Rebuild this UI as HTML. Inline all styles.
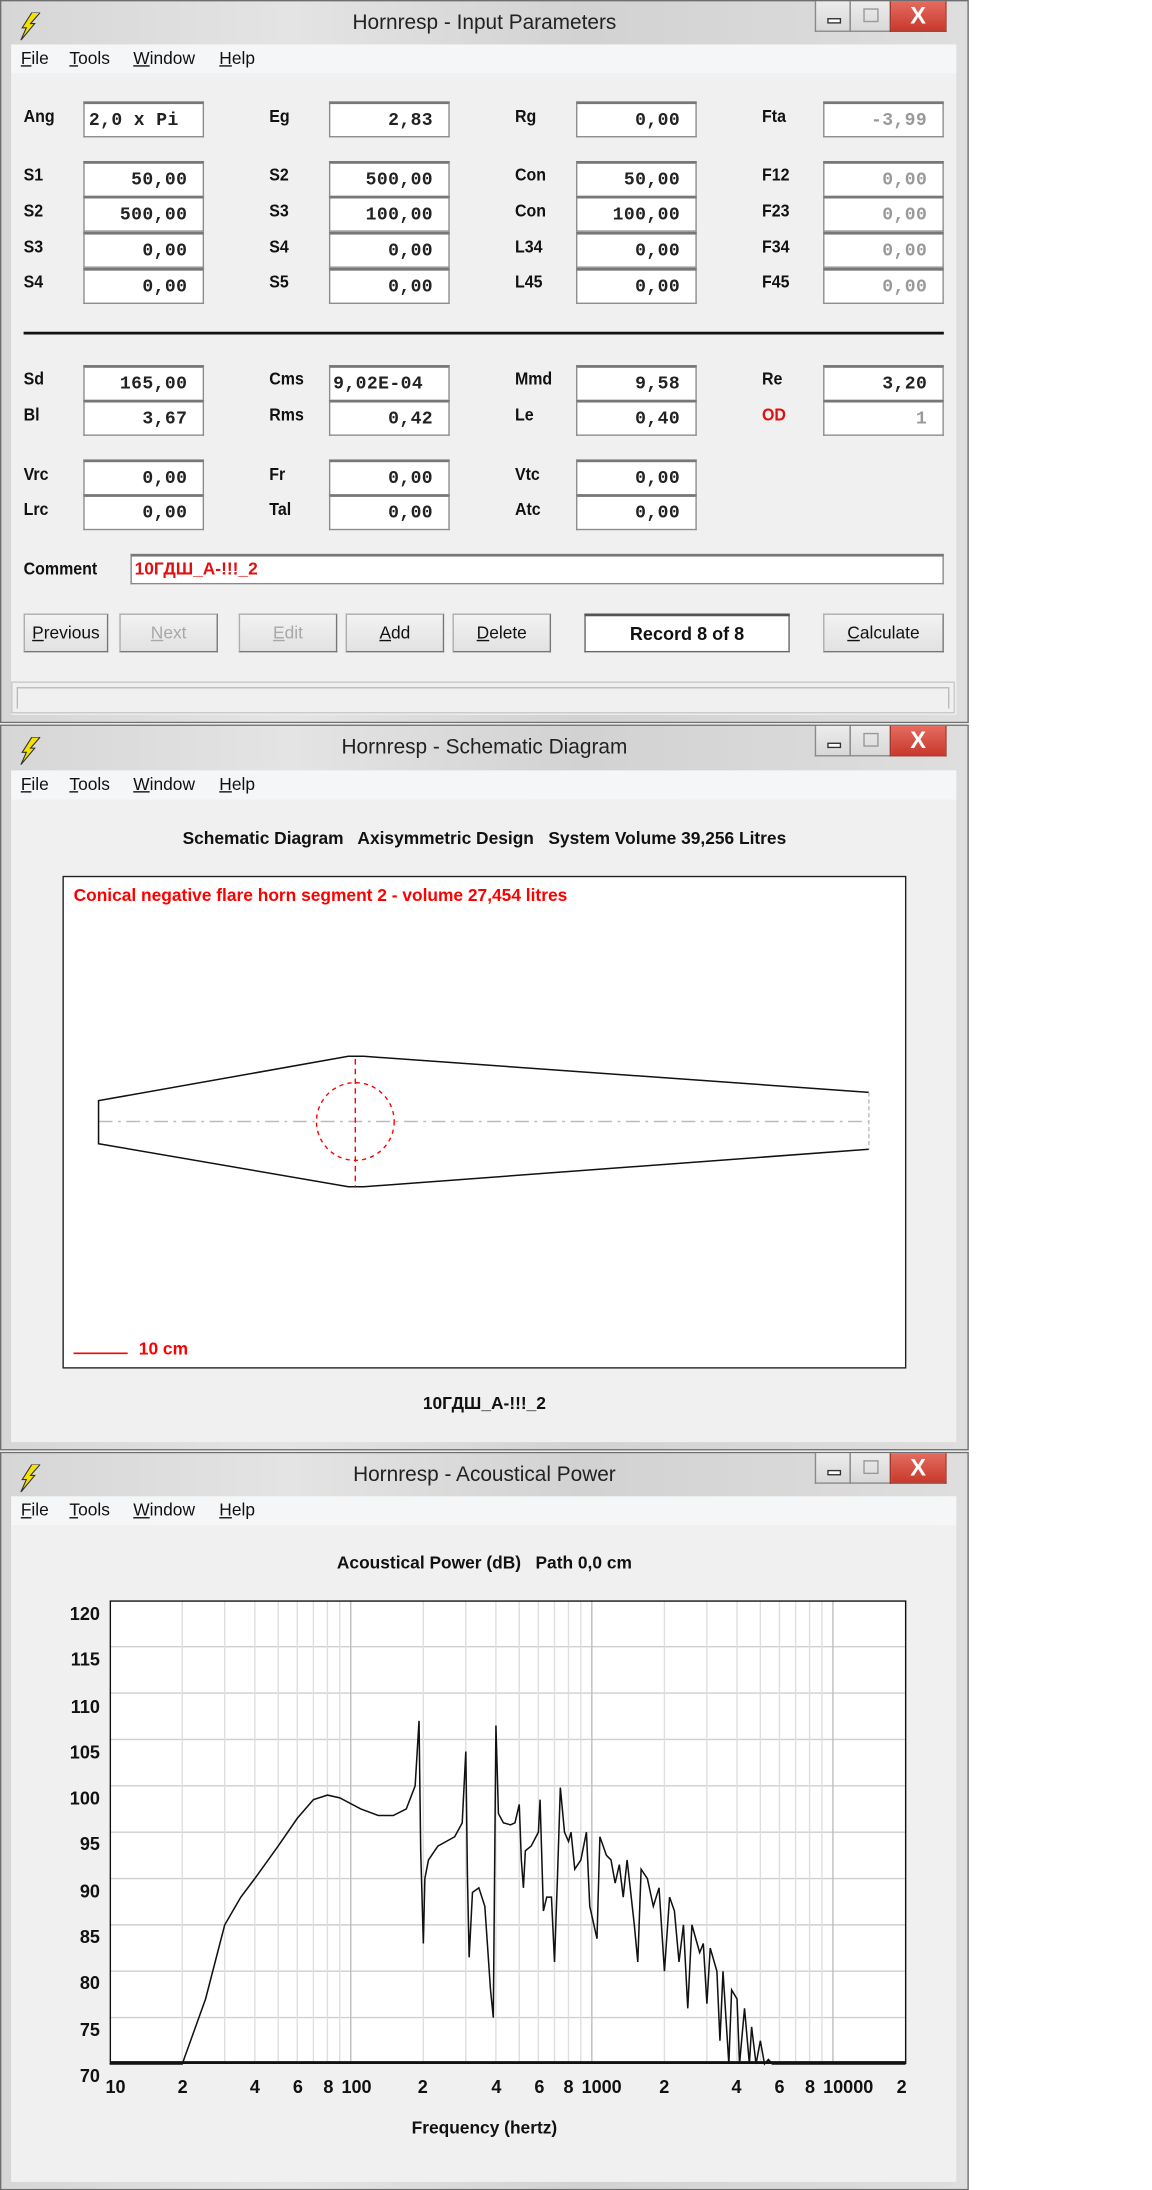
<!DOCTYPE html>
<html><head><meta charset="utf-8">
<style>
*{margin:0;padding:0;box-sizing:border-box}
html,body{width:1152px;height:2190px;overflow:hidden;background:#fff}
#wrap{position:absolute;left:0;top:0;width:830px;height:1578px;transform:scale(1.388);transform-origin:0 0;font-family:"Liberation Sans Narrow","Liberation Sans",sans-serif}
.win{position:absolute;left:0;width:698px;background:linear-gradient(90deg,#d6d6d6,#e4e4e4 30%,#d2d2d2 60%,#dedede);border:1px solid #6e6e6e}
.client{position:absolute;left:7px;right:8px;background:#f0f0f0}
.menu{position:absolute;left:7px;right:8px;height:21px;background:#f5f6f7;font-family:"Liberation Sans",sans-serif;font-size:12.5px;color:#111}
.menu span{position:absolute;top:3px}
.menu u{text-decoration:underline}
.title{position:absolute;left:0;right:0;top:7px;text-align:center;font-family:"Liberation Sans",sans-serif;font-size:15px;color:#222}
.bolt{position:absolute;left:12px;top:8px}
.bmin,.bmax,.bcl{position:absolute;top:0;height:22px;border:1px solid #8a8a8a;border-top:none}
.bmin{left:586px;width:26px;background:linear-gradient(#ececec,#d8d8d8)}
.bmax{left:611px;width:30px;background:linear-gradient(#ececec,#d8d8d8)}
.bcl{left:640px;width:41px;background:linear-gradient(#e46c60,#c9392c);border-color:#9c3a30}
.bcl b{position:absolute;left:0;right:0;top:1px;text-align:center;color:#fff;font:bold 17px "Liberation Sans",sans-serif}
.lb{position:absolute;font-weight:bold;font-size:12.5px;color:#111;transform:scaleX(.92);transform-origin:0 0}
.fd{position:absolute;width:87px;height:26px;background:#fff;border:1px solid #8c8c8c;border-top:2px solid #777;font-family:"Liberation Mono",monospace;font-weight:bold;font-size:13px;color:#222;text-align:right;padding:4px 11px 0 0;letter-spacing:.3px}
.g{color:#999}
.btn{position:absolute;top:442px;height:28px;background:linear-gradient(#f2f2f2,#e2e2e2);border:1px solid #adadad;border-right-color:#777;border-bottom-color:#777;font-size:12.5px;color:#111;text-align:center;padding-top:6px}
.btn.dis{color:#a8a8a8}
.c{position:absolute;left:0;width:698px;text-align:center;font-weight:bold;font-size:12.5px;color:#111}
</style></head><body>
<div id="wrap">

<!-- WINDOW 1 -->
<div class="win" style="top:0;height:521px">
  <svg class="bolt" width="16" height="20" viewBox="0 0 16 20"><path d="M10 0 L16 0 L9 8 L12 8 L2 20 L6 11 L3 11 Z" fill="#f5e000" stroke="#333" stroke-width=".8"/></svg>
  <div class="title">Hornresp - Input Parameters</div>
  <div class="bmin"><div style="position:absolute;left:8px;top:12px;width:10px;height:4px;border:1px solid #333;background:#fff"></div></div>
  <div class="bmax"><div style="position:absolute;left:9px;top:5px;width:11px;height:10px;border:1px solid #999"></div></div>
  <div class="bcl"><b>X</b></div>
  <div class="menu" style="top:31px"><span style="left:7px"><u>F</u>ile</span><span style="left:42px"><u>T</u>ools</span><span style="left:88px"><u>W</u>indow</span><span style="left:150px"><u>H</u>elp</span></div>
  <div class="client" style="top:52px;height:462px"></div>
</div>
<div style="position:absolute;left:0;top:0;width:698px;height:521px">
  <div class="lb" style="left:17px;top:77px">Ang</div><div class="fd" style="left:60px;top:73px;text-align:left;padding-left:3px">2,0 x Pi</div>
  <div class="lb" style="left:194px;top:77px">Eg</div><div class="fd" style="left:237px;top:73px">2,83</div>
  <div class="lb" style="left:371px;top:77px">Rg</div><div class="fd" style="left:415px;top:73px">0,00</div>
  <div class="lb" style="left:549px;top:77px">Fta</div><div class="fd g" style="left:593px;top:73px">-3,99</div>

  <div class="lb" style="left:17px;top:119px">S1</div><div class="fd" style="left:60px;top:116px">50,00</div>
  <div class="lb" style="left:17px;top:145px">S2</div><div class="fd" style="left:60px;top:141px">500,00</div>
  <div class="lb" style="left:17px;top:171px">S3</div><div class="fd" style="left:60px;top:167px">0,00</div>
  <div class="lb" style="left:17px;top:196px">S4</div><div class="fd" style="left:60px;top:193px">0,00</div>

  <div class="lb" style="left:194px;top:119px">S2</div><div class="fd" style="left:237px;top:116px">500,00</div>
  <div class="lb" style="left:194px;top:145px">S3</div><div class="fd" style="left:237px;top:141px">100,00</div>
  <div class="lb" style="left:194px;top:171px">S4</div><div class="fd" style="left:237px;top:167px">0,00</div>
  <div class="lb" style="left:194px;top:196px">S5</div><div class="fd" style="left:237px;top:193px">0,00</div>

  <div class="lb" style="left:371px;top:119px">Con</div><div class="fd" style="left:415px;top:116px">50,00</div>
  <div class="lb" style="left:371px;top:145px">Con</div><div class="fd" style="left:415px;top:141px">100,00</div>
  <div class="lb" style="left:371px;top:171px">L34</div><div class="fd" style="left:415px;top:167px">0,00</div>
  <div class="lb" style="left:371px;top:196px">L45</div><div class="fd" style="left:415px;top:193px">0,00</div>

  <div class="lb" style="left:549px;top:119px">F12</div><div class="fd g" style="left:593px;top:116px">0,00</div>
  <div class="lb" style="left:549px;top:145px">F23</div><div class="fd g" style="left:593px;top:141px">0,00</div>
  <div class="lb" style="left:549px;top:171px">F34</div><div class="fd g" style="left:593px;top:167px">0,00</div>
  <div class="lb" style="left:549px;top:196px">F45</div><div class="fd g" style="left:593px;top:193px">0,00</div>

  <div style="position:absolute;left:17px;top:239px;width:663px;height:2px;background:#111"></div>

  <div class="lb" style="left:17px;top:266px">Sd</div><div class="fd" style="left:60px;top:263px">165,00</div>
  <div class="lb" style="left:17px;top:292px">Bl</div><div class="fd" style="left:60px;top:288px">3,67</div>
  <div class="lb" style="left:194px;top:266px">Cms</div><div class="fd" style="left:237px;top:263px;text-align:left;padding-left:2px">9,02E-04</div>
  <div class="lb" style="left:194px;top:292px">Rms</div><div class="fd" style="left:237px;top:288px">0,42</div>
  <div class="lb" style="left:371px;top:266px">Mmd</div><div class="fd" style="left:415px;top:263px">9,58</div>
  <div class="lb" style="left:371px;top:292px">Le</div><div class="fd" style="left:415px;top:288px">0,40</div>
  <div class="lb" style="left:549px;top:266px">Re</div><div class="fd" style="left:593px;top:263px">3,20</div>
  <div class="lb" style="left:549px;top:292px;color:#e01010">OD</div><div class="fd g" style="left:593px;top:288px">1</div>

  <div class="lb" style="left:17px;top:335px">Vrc</div><div class="fd" style="left:60px;top:331px">0,00</div>
  <div class="lb" style="left:17px;top:360px">Lrc</div><div class="fd" style="left:60px;top:356px">0,00</div>
  <div class="lb" style="left:194px;top:335px">Fr</div><div class="fd" style="left:237px;top:331px">0,00</div>
  <div class="lb" style="left:194px;top:360px">Tal</div><div class="fd" style="left:237px;top:356px">0,00</div>
  <div class="lb" style="left:371px;top:335px">Vtc</div><div class="fd" style="left:415px;top:331px">0,00</div>
  <div class="lb" style="left:371px;top:360px">Atc</div><div class="fd" style="left:415px;top:356px">0,00</div>

  <div class="lb" style="left:17px;top:403px">Comment</div>
  <div style="position:absolute;left:94px;top:399px;width:586px;height:22px;background:#fff;border:1px solid #888;border-top:2px solid #777;color:#e01010;font-weight:bold;font-size:12.5px;padding:2px 0 0 2px;font-family:'Liberation Sans Narrow','Liberation Sans','Noto Sans CJK SC',sans-serif">10ГДШ_А-!!!_2</div>

  <div class="btn" style="left:17px;width:61px"><u>P</u>revious</div>
  <div class="btn dis" style="left:86px;width:71px"><u>N</u>ext</div>
  <div class="btn dis" style="left:172px;width:71px"><u>E</u>dit</div>
  <div class="btn" style="left:249px;width:71px"><u>A</u>dd</div>
  <div class="btn" style="left:326px;width:71px"><u>D</u>elete</div>
  <div style="position:absolute;left:421px;top:442px;width:148px;height:28px;background:#fff;border:1px solid #666;border-top:2px solid #555;text-align:center;font-weight:bold;font-size:13px;padding-top:5px;color:#111">Record 8 of 8</div>
  <div class="btn" style="left:593px;width:87px"><u>C</u>alculate</div>

  <div style="position:absolute;left:8px;top:491px;width:680px;height:23px;border:1px solid #c8c8c8;background:#f0f0f0"><div style="position:absolute;left:3px;top:3px;right:3px;bottom:2px;border:1px solid #bbb;border-bottom-color:#eee"></div></div>
</div>

<!-- WINDOW 2 -->
<div class="win" style="top:522px;height:523px">
  <svg class="bolt" width="16" height="20" viewBox="0 0 16 20"><path d="M10 0 L16 0 L9 8 L12 8 L2 20 L6 11 L3 11 Z" fill="#f5e000" stroke="#333" stroke-width=".8"/></svg>
  <div class="title">Hornresp - Schematic Diagram</div>
  <div class="bmin"><div style="position:absolute;left:8px;top:12px;width:10px;height:4px;border:1px solid #333;background:#fff"></div></div>
  <div class="bmax"><div style="position:absolute;left:9px;top:5px;width:11px;height:10px;border:1px solid #999"></div></div>
  <div class="bcl"><b>X</b></div>
  <div class="menu" style="top:32px"><span style="left:7px"><u>F</u>ile</span><span style="left:42px"><u>T</u>ools</span><span style="left:88px"><u>W</u>indow</span><span style="left:150px"><u>H</u>elp</span></div>
  <div class="client" style="top:53px;height:463px"></div>
</div>
<div class="c" style="top:597px">Schematic Diagram&nbsp;&nbsp; Axisymmetric Design&nbsp;&nbsp; System Volume 39,256 Litres</div>
<div style="position:absolute;left:45px;top:631px;width:608px;height:355px;background:#fff;border:1px solid #222"></div>
<div style="position:absolute;left:53px;top:638px;color:#f00;font-weight:bold;font-size:12.5px">Conical negative flare horn segment 2 - volume 27,454 litres</div>
<svg style="position:absolute;left:0;top:0" width="698" height="1045" viewBox="0 0 698 1045">
  <line x1="71" y1="808" x2="626" y2="808" stroke="#bbb" stroke-width="1" stroke-dasharray="10,4,2,4"/>
  <polyline points="71,808 71,793 251,761 262,761 626,787" fill="none" stroke="#111" stroke-width="1.1"/>
  <polyline points="71,808 71,824 251,855 262,855 626,828" fill="none" stroke="#111" stroke-width="1.1"/>
  <line x1="626" y1="787" x2="626" y2="828" stroke="#bbb" stroke-dasharray="3,2"/>
  <circle cx="256" cy="808" r="28" fill="none" stroke="#f00" stroke-dasharray="3,3"/>
  <line x1="256" y1="763" x2="256" y2="855" stroke="#f00" stroke-dasharray="4,3"/>
  <line x1="53" y1="975" x2="92" y2="975" stroke="#f00" stroke-width="1.2"/>
</svg>
<div style="position:absolute;left:100px;top:965px;color:#f00;font-weight:bold;font-size:12.5px">10 cm</div>
<div class="c" style="top:1004px;font-family:'Liberation Sans Narrow','Liberation Sans','Noto Sans CJK SC',sans-serif">10ГДШ_А-!!!_2</div>

<!-- WINDOW 3 -->
<div class="win" style="top:1046px;height:532px">
  <svg class="bolt" width="16" height="20" viewBox="0 0 16 20"><path d="M10 0 L16 0 L9 8 L12 8 L2 20 L6 11 L3 11 Z" fill="#f5e000" stroke="#333" stroke-width=".8"/></svg>
  <div class="title">Hornresp - Acoustical Power</div>
  <div class="bmin"><div style="position:absolute;left:8px;top:12px;width:10px;height:4px;border:1px solid #333;background:#fff"></div></div>
  <div class="bmax"><div style="position:absolute;left:9px;top:5px;width:11px;height:10px;border:1px solid #999"></div></div>
  <div class="bcl"><b>X</b></div>
  <div class="menu" style="top:31px"><span style="left:7px"><u>F</u>ile</span><span style="left:42px"><u>T</u>ools</span><span style="left:88px"><u>W</u>indow</span><span style="left:150px"><u>H</u>elp</span></div>
  <div class="client" style="top:52px;height:473px"></div>
</div>
<div class="c" style="top:1119px">Acoustical Power (dB)&nbsp;&nbsp; Path 0,0 cm</div>
<div style="position:absolute;left:79px;top:1153px;width:574px;height:334px;background:#fff"></div>
<svg id="ch" style="position:absolute;left:79px;top:1153px;overflow:visible" width="574" height="334"></svg>
<div style="position:absolute;left:79px;top:1153px;width:574px;height:334px;border:1px solid #111;border-bottom:2px solid #111"></div>
<div style="position:absolute;left:40px;top:1146px;width:32px;text-align:right;font-weight:bold;font-size:13px;line-height:33.3px;color:#111">120<br>115<br>110<br>105<br>100<br>95<br>90<br>85<br>80<br>75<br>70</div>
<div id="xl" style="position:absolute;left:0;top:1496px;font-weight:bold;font-size:13px;color:#111">
<span style="position:absolute;left:76px">10</span><span style="position:absolute;left:128px">2</span><span style="position:absolute;left:180px">4</span><span style="position:absolute;left:211px">6</span><span style="position:absolute;left:233px">8</span><span style="position:absolute;left:246px">100</span><span style="position:absolute;left:301px">2</span><span style="position:absolute;left:354px">4</span><span style="position:absolute;left:385px">6</span><span style="position:absolute;left:406px">8</span><span style="position:absolute;left:419px">1000</span><span style="position:absolute;left:475px">2</span><span style="position:absolute;left:527px">4</span><span style="position:absolute;left:558px">6</span><span style="position:absolute;left:580px">8</span><span style="position:absolute;left:593px">10000</span><span style="position:absolute;left:646px">2</span>
</div>
<div class="c" style="top:1526px">Frequency (hertz)</div>

</div>
<script>
(function(){
var s=document.getElementById('ch'),W=574,H=334,D=173.7,ns='http://www.w3.org/2000/svg',h='';
function X(f){return D*Math.log10(f/10);}
function Y(d){return (120-d)*H/50;}
for(var i=1;i<10;i++){h+='<line x1="0" x2="'+W+'" y1="'+(i*H/10)+'" y2="'+(i*H/10)+'" stroke="#cfcfcf"/>';}
[10,100,1000,10000].forEach(function(b){for(var k=1;k<10;k++){var f=b*k;if(f>20000)break;var x=X(f);if(x<=0)continue;h+='<line y1="0" y2="'+H+'" x1="'+x+'" x2="'+x+'" stroke="'+(k==1?'#bdbdbd':'#dedede')+'"/>';}});
var p=[[10,70],[20,70],[25,77],[30,85],[35,88],[40,90],[50,93.5],[60,96.5],[70,98.5],[80,99],[90,98.7],[110,97.5],[130,96.8],[150,96.8],[170,97.5],[185,100],[192,107],[195,93],[200,83],[203,90],[210,92],[230,93.5],[270,94.5],[290,96],[300,103.7],[305,90],[310,81.5],[320,88.5],[340,89],[360,87],[380,78],[390,75],[395,90],[400,106.5],[410,97],[430,96],[460,95.8],[480,96],[500,98],[510,92],[520,89],[530,93],[560,93.5],[600,95],[610,98.5],[630,86.5],[650,88],[680,88],[700,81],[720,90],[740,99.8],[770,95],[800,94],[820,95],[850,91],[900,92],[950,95],[980,87],[1000,86],[1050,83.5],[1080,94.5],[1150,92.5],[1200,92],[1250,89.5],[1300,91.5],[1350,88],[1400,92],[1500,85],[1550,81],[1600,91],[1700,90],[1800,87],[1900,89],[2000,80],[2100,88],[2200,86.5],[2300,81],[2400,85],[2500,76],[2600,85],[2800,82],[2900,83],[3000,76.5],[3100,82.5],[3300,80],[3400,72.5],[3500,80],[3700,70],[3800,78],[4000,77],[4100,70],[4300,76],[4500,70],[4600,74],[4800,70],[5000,72.5],[5200,70],[5400,70.5],[5600,70],[20000,70]];
h+='<polyline fill="none" stroke="#111" stroke-width="1.1" points="'+p.map(function(a){return X(a[0]).toFixed(1)+','+Y(a[1]).toFixed(1);}).join(' ')+'"/>';
s.innerHTML=h;
})();
</script>
</body></html>
